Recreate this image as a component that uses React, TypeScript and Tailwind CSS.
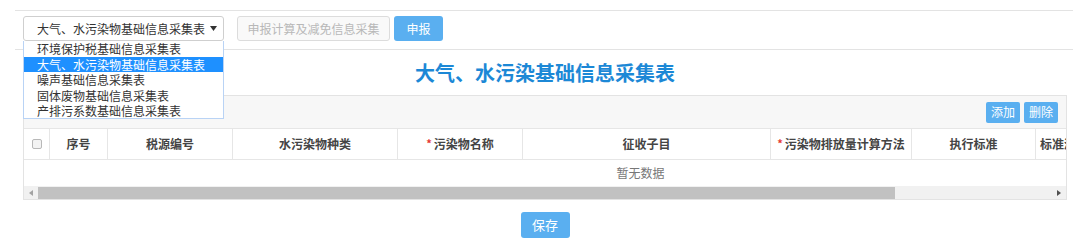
import React from 'react';

const font = { fontFamily: '"Noto Sans CJK SC", "Noto Sans", sans-serif' };

interface Column {
  title: string;
  width: number;
  required?: boolean;
  align?: 'center' | 'left';
}

const columns: Column[] = [
  { title: '序号', width: 58 },
  { title: '税源编号', width: 125 },
  { title: '水污染物种类', width: 165 },
  { title: '污染物名称', width: 125, required: true },
  { title: '征收子目', width: 248 },
  { title: '污染物排放量计算方法', width: 141, required: true },
  { title: '执行标准', width: 124 },
  { title: '标准浓度值', width: 221, align: 'left' },
];

const options = [
  '环境保护税基础信息采集表',
  '大气、水污染物基础信息采集表',
  '噪声基础信息采集表',
  '固体废物基础信息采集表',
  '产排污系数基础信息采集表',
];

const SelectBox: React.FC = () => {
  const selected = 1;
  return (
    <div className="relative w-[201px]">
      <div className="h-[25px] border border-[#cfcfcf] rounded-[3px] bg-white flex items-center justify-between pl-[13px] pr-[6px] text-[12px] text-[#333]">
        <span>大气、水污染物基础信息采集表</span>
        <svg width="7" height="5" viewBox="0 0 7 5">
          <path d="M0 0 L7 0 L3.5 5 Z" fill="#333" />
        </svg>
      </div>
      <div className="absolute left-0 top-[25px] z-10 w-[201px] h-[78px] overflow-hidden border border-t-0 border-[#b9d3f5] bg-white">
        {options.map((opt, i) => (
          <div
            key={opt}
            className={`h-[15.6px] leading-[15.6px] pl-[13px] text-[12px] whitespace-nowrap ${
              i === selected ? 'bg-[#1e90ff] text-white' : 'text-[#333]'
            }`}
          >
            {opt}
          </div>
        ))}
      </div>
    </div>
  );
};

const App: React.FC = () => {
  return (
    <div className="w-[1080px] h-[251px] bg-white overflow-hidden pt-[10px]" style={font}>
      <div className="ml-[15px] w-[1058px] h-[40px] border-y border-[#e3e3e3] pt-[5px] pl-[8px] flex items-start">
        <SelectBox />
        <button className="ml-[13px] h-[25px] w-[153px] border border-[#dcdcdc] rounded-[3px] bg-[#f9f9f9] text-[12px] text-[#b8b8b8]">
          申报计算及减免信息采集
        </button>
        <button className="ml-[4px] h-[25px] w-[49px] rounded-[3px] bg-[#5aaff0] text-[12px] text-white">
          申报
        </button>
      </div>

      <div className="ml-[23px] w-[1044px] h-[45px] flex items-center justify-center">
        <h1 className="text-[20px] font-bold text-[#1c88d6] tracking-[0px]">大气、水污染基础信息采集表</h1>
      </div>

      <div className="ml-[23px] w-[1044px] border border-[#e3e3e3] bg-[#f7f7f7] overflow-hidden">
        <div className="h-[32px] flex items-center justify-end gap-[4px] pr-[8px]">
          <button className="h-[21px] w-[34px] rounded-[2px] bg-[#5aaff0] text-[12px] text-white">添加</button>
          <button className="h-[21px] w-[34px] rounded-[2px] bg-[#5aaff0] text-[12px] text-white">删除</button>
        </div>
        <div className="w-[1233px] bg-white">
          <div className="flex h-[32px] border-y border-[#e6e6e6]">
            <div className="w-[26px] shrink-0 border-r border-[#e6e6e6] flex items-center justify-center">
              <span className="w-[10px] h-[10px] border border-[#b8b8b8] rounded-[2px] bg-[#f3f3f3]" />
            </div>
            {columns.map((col) => (
              <div
                key={col.title}
                style={{ width: col.width }}
                className={`shrink-0 border-r border-[#e6e6e6] flex text-[12px] font-bold text-[#444] whitespace-nowrap ${
                  col.align === 'left' ? 'justify-start pl-[4px]' : 'justify-center'
                } ${col.required ? 'items-start pt-[6px]' : 'items-center'}`}
              >
                {col.required && <span className="text-[#e53935] mr-[2px] text-[11px]">*</span>}
                {col.title}
              </div>
            ))}
          </div>
          <div className="h-[26px] flex items-center justify-center text-[12px] text-[#777]">暂无数据</div>
        </div>
        <div className="h-[13px] bg-[#f1f1f1] flex items-center">
          <div className="w-[14px] h-full flex items-center justify-center">
            <svg width="4" height="6" viewBox="0 0 4 6">
              <path d="M4 0 L4 6 L0 3 Z" fill="#a3a3a3" />
            </svg>
          </div>
          <div className="w-[857px] h-[12px] bg-[#c1c1c1]" />
          <div className="flex-1" />
          <div className="w-[14px] h-full flex items-center justify-center">
            <svg width="4" height="6" viewBox="0 0 4 6">
              <path d="M0 0 L0 6 L4 3 Z" fill="#505050" />
            </svg>
          </div>
        </div>
      </div>

      <div className="ml-[23px] w-[1044px] mt-[12px] flex justify-center">
        <button className="h-[26px] w-[49px] rounded-[3px] bg-[#5aaff0] text-[13px] text-white">保存</button>
      </div>
    </div>
  );
};

export default App;
